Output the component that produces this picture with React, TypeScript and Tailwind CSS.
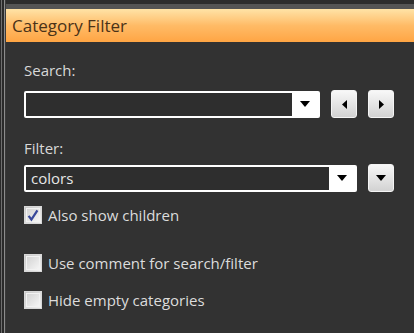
import React from "react";

const font = { fontFamily: '"Open Sans", "Noto Sans", sans-serif' };

function Triangle({ dir = "down" }: { dir?: "down" | "left" | "right" }) {
  if (dir === "down")
    return (
      <svg width="10" height="6" viewBox="0 0 10 6">
        <path d="M0 0H10L5 6Z" fill="#000" />
      </svg>
    );
  if (dir === "left")
    return (
      <svg width="5" height="9" viewBox="0 0 5 9">
        <path d="M5 0V9L0 4.5Z" fill="#000" />
      </svg>
    );
  return (
    <svg width="5" height="9" viewBox="0 0 5 9">
      <path d="M0 0V9L5 4.5Z" fill="#000" />
    </svg>
  );
}

function SmallButton({ children }: { children: React.ReactNode }) {
  return (
    <div className="w-[26px] h-[28px] rounded-[3px] border border-[#f4f4f4] bg-gradient-to-b from-[#f8f8f8] to-[#d2d2d2] flex items-center justify-center">
      {children}
    </div>
  );
}

function Combo({ width, text }: { width: number; text?: string }) {
  return (
    <div
      className="h-[27px] rounded-[2px] bg-white p-[2px] flex"
      style={{ width }}
    >
      <div className="flex-1 bg-[#2e2e2e] flex items-center pl-[5px] text-[15px] text-[#e6e6e6]">
        {text}
      </div>
      <div className="w-[26px] flex items-center justify-center">
        <Triangle />
      </div>
    </div>
  );
}

function Check({ checked, label }: { checked?: boolean; label: string }) {
  return (
    <div className="flex items-center gap-[6px]">
      <div className="w-[18px] h-[18px] border border-[#d8d8d8] bg-gradient-to-br from-[#c8c8c8] to-[#f0f0f0] p-[1px] flex items-center justify-center">
        <div className="w-full h-full border border-[#f2f2f2] bg-gradient-to-br from-[#d4d4d4] to-[#f4f4f4] flex items-center justify-center">
          {checked && (
            <svg width="15" height="15" viewBox="0 0 15 15">
              <path
                d="M2 8L5.5 12.5L13 1"
                fill="none"
                stroke="#38489a"
                strokeWidth="2.8"
                strokeLinejoin="miter"
              />
            </svg>
          )}
        </div>
      </div>
      <span className="text-[15px] text-[#dcdcdc] leading-[20px]">{label}</span>
    </div>
  );
}

export default function App() {
  return (
    <div
      className="w-[414px] h-[333px] bg-[#323232] flex overflow-hidden"
      style={font}
    >
      <div className="w-[6px] flex">
        <div className="w-[1px] bg-[#2a2a2a]" />
        <div className="w-[1px] bg-[#6e6e6e]" />
        <div className="w-[2px] bg-[#2a2a2a]" />
        <div className="w-[1px] bg-[#8c8c8c]" />
        <div className="w-[1px] bg-[#3a3a3a]" />
      </div>
      <div className="flex-1 flex flex-col">
        <div className="h-[4px] bg-[#2c2c2c]" />
        <div className="h-[5px] bg-[#545454]" />
        <div className="h-[33px] bg-gradient-to-b from-[#ffe3a6] via-[#ffbb66] to-[#ffa543] flex items-center pl-[6px] text-[17px] text-[#4a3218]">
          Category Filter
        </div>
        <div className="pl-[18px] flex flex-col">
          <div className="mt-[18px] text-[15px] leading-[20px] text-[#d8d8d8]">
            Search:
          </div>
          <div className="mt-[10px] flex items-center">
            <Combo width={296} />
            <div className="ml-[11px]">
              <SmallButton>
                <Triangle dir="left" />
              </SmallButton>
            </div>
            <div className="ml-[11px]">
              <SmallButton>
                <Triangle dir="right" />
              </SmallButton>
            </div>
          </div>
          <div className="mt-[20px] text-[15px] leading-[20px] text-[#d8d8d8]">
            Filter:
          </div>
          <div className="mt-[6px] flex items-center">
            <Combo width={333} text="colors" />
            <div className="ml-[11px]">
              <SmallButton>
                <Triangle />
              </SmallButton>
            </div>
          </div>
          <div className="mt-[13px]">
            <Check checked label="Also show children" />
          </div>
          <div className="mt-[28px]">
            <Check label="Use comment for search/filter" />
          </div>
          <div className="mt-[17px]">
            <Check label="Hide empty categories" />
          </div>
        </div>
      </div>
    </div>
  );
}
